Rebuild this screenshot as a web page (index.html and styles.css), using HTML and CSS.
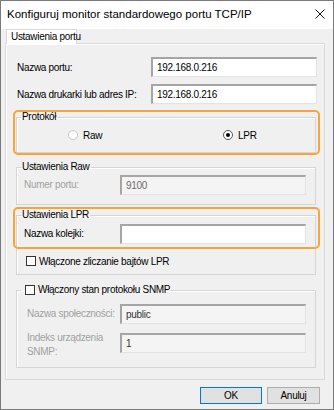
FILE: index.html
```html
<!DOCTYPE html>
<html>
	<head>
		<title>Konfiguruj monitor</title>
		<link rel="stylesheet" href="styles.css">
	</head>
	<body>
		<div class="window">
			<div class="titleBar">
				<span class="title">Konfiguruj monitor standardowego portu TCP/IP</span>
				<svg class="close" width="10" height="10" viewBox="0 0 10 10">
					<path d="M0.5 0.5 L9.5 9.5 M9.5 0.5 L0.5 9.5" stroke="#111" stroke-width="1" fill="none"/>
				</svg>
			</div>

			<div class="dialogBody">
				<div class="tabStrip">
					<div class="tab">Ustawienia portu</div>
				</div>

				<div class="tabPanel">
					<div class="row">
						<span class="rowLabel">Nazwa portu:</span>
						<div class="textBox">192.168.0.216</div>
					</div>
					<div class="row">
						<span class="rowLabel">Nazwa drukarki lub adres IP:</span>
						<div class="textBox">192.168.0.216</div>
					</div>

					<fieldset class="group protoGroup">
						<legend>Protokół</legend>
						<div class="radios">
							<span class="radio"><span class="dot"></span>Raw</span>
							<span class="radio checked"><span class="dot"></span>LPR</span>
						</div>
						<span class="highlight protoMark"></span>
					</fieldset>

					<fieldset class="group rawGroup">
						<legend>Ustawienia Raw</legend>
						<div class="field">
							<span class="fieldLabel off">Numer portu:</span>
							<div class="textBox disabled grayText">9100</div>
						</div>
					</fieldset>

					<fieldset class="group lprGroup">
						<legend>Ustawienia LPR</legend>
						<div class="field">
							<span class="fieldLabel">Nazwa kolejki:</span>
							<div class="textBox"></div>
						</div>
						<div class="check"><span class="box"></span>Włączone zliczanie bajtów LPR</div>
						<span class="highlight lprMark"></span>
					</fieldset>

					<fieldset class="group snmpGroup">
						<legend class="checkLegend"><span class="box"></span>Włączony stan protokołu SNMP</legend>
						<div class="field">
							<span class="fieldLabel off">Nazwa społeczności:</span>
							<div class="textBox disabled">public</div>
						</div>
						<div class="field tall">
							<span class="fieldLabel off">Indeks urządzenia<br>SNMP:</span>
							<div class="textBox disabled">1</div>
						</div>
					</fieldset>
				</div>

				<div class="buttons">
					<button class="btn okBtn">OK</button>
					<button class="btn">Anuluj</button>
				</div>
			</div>
		</div>
	</body>
</html>
```

FILE: styles.css
```css
* {
	box-sizing: border-box;
}

body {
	margin: 0;
	font-family: "Liberation Sans", Arial, sans-serif;
	font-size: 10px;
	letter-spacing: -0.3px;
	color: #000;
}

.window {
	width: 334px;
	height: 410px;
	border: 1px solid #7a7a7a;
	background-color: #f0f0f0;
	display: flex;
	flex-direction: column;
}

.titleBar {
	height: 28px;
	background-color: #fff;
	display: flex;
	align-items: center;
	justify-content: space-between;
	padding: 0 8px 0 6px;
}

.title {
	font-size: 11.5px;
	letter-spacing: 0;
	margin-top: -2px;
}

.close {
	margin-top: -2px;
}

.dialogBody {
	flex: 1;
	padding: 0 8px 0 4px;
	display: flex;
	flex-direction: column;
}

.tabStrip {
	display: flex;
	padding-left: 1px;
}

.tab {
	background-color: #fff;
	border: 1px solid #d9d9d9;
	border-bottom: none;
	height: 15px;
	line-height: 14px;
	padding: 0 4px;
	width: 71px;
	white-space: nowrap;
	position: relative;
	z-index: 1;
	margin-bottom: -1px;
}

.tabPanel {
	height: 337px;
	border: 1px solid #d9d9d9;
	box-shadow: inset 1px 1px 0 #fff;
	padding: 13px 8px 0 10px;
}

.row {
	display: flex;
	align-items: center;
	height: 20px;
	margin-bottom: 7px;
	margin-right: -1px;
}

.rowLabel {
	width: 135px;
	padding-left: 1px;
	white-space: nowrap;
}

.textBox {
	flex: 1;
	height: 20px;
	line-height: 18px;
	background-color: #fff;
	border-top: 2px solid #a5a5a5;
	border-left: 2px solid #a5a5a5;
	border-right: 1px solid #e3e3e3;
	border-bottom: 1px solid #e3e3e3;
	padding-left: 4px;
}

.textBox.disabled {
	background-color: #f4f4f4;
	color: #333;
}

.textBox.grayText {
	color: #6d6d6d;
}

/* group boxes */
.group {
	position: relative;
	margin: 0;
	border: 1px solid #d5d5d5;
	box-shadow: inset 1px 1px 0 #fff;
	padding: 0 9px 0 7px;
	min-width: 0;
}

.group legend {
	line-height: 14px;
	padding: 0 1px;
	margin-left: -3px;
}

.protoGroup {
	margin-top: -1px;
	padding-top: 4px;
	padding-bottom: 10px;
}

.rawGroup {
	margin-top: 7px;
	padding-top: 1px;
	padding-bottom: 9px;
}

.lprGroup {
	margin-top: 3px;
	padding-top: 2px;
	padding-bottom: 6px;
}

.snmpGroup {
	margin-top: 8px;
	padding-top: 7px;
	padding-bottom: 14px;
}

.snmpGroup .fieldLabel {
	padding-left: 3px;
}

.highlight {
	position: absolute;
	border: 2px solid #f7a43c;
	border-radius: 5px;
	left: -4px;
	right: -5px;
	pointer-events: none;
}

.protoMark {
	top: -14px;
	bottom: -3px;
}

.lprMark {
	top: -15px;
	height: 42px;
}

.radios {
	display: flex;
	height: 14px;
	align-items: center;
	padding-left: 44px;
}

.radio {
	display: flex;
	align-items: center;
	gap: 5px;
	flex-shrink: 0;
}

.radio:first-child {
	width: 155px;
}

.dot {
	width: 10px;
	height: 10px;
	border-radius: 50%;
	border: 1px solid #c8c8c8;
	background-color: #fff;
	display: flex;
	align-items: center;
	justify-content: center;
}

.checked .dot {
	border-color: #555;
}

.checked .dot::after {
	content: "";
	width: 4px;
	height: 4px;
	border-radius: 50%;
	background-color: #000;
}

.field {
	display: flex;
	align-items: center;
	height: 20px;
}

.field.tall {
	margin-top: 9px;
	align-items: flex-start;
}

.fieldLabel {
	width: 96px;
	flex-shrink: 0;
	line-height: 14px;
	white-space: nowrap;
}

.fieldLabel.off {
	color: #a0a0a0;
}

.tall .fieldLabel {
	margin-top: -2px;
}

.check {
	display: flex;
	align-items: center;
	height: 14px;
	margin-top: 10px;
	padding-left: 2px;
}

.box {
	width: 10px;
	height: 10px;
	border: 1px solid #333;
	background-color: #fff;
	margin-right: 3px;
}

.checkLegend {
	display: flex;
	align-items: center;
}

.checkLegend .box {
	margin-left: 3px;
}

.buttons {
	display: flex;
	justify-content: flex-end;
	gap: 5px;
	margin-top: 7px;
	padding-right: 5px;
}

.btn {
	height: 17px;
	width: 53px;
	font-family: inherit;
	font-size: 10px;
	letter-spacing: -0.3px;
	background-color: #e1e1e1;
	border: 1px solid #adadad;
	padding: 0;
}

.okBtn {
	width: 62px;
	border-color: #0078d7;
}
```
